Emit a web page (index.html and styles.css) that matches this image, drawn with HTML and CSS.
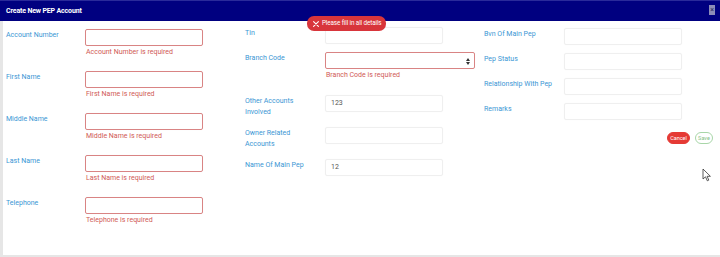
FILE: index.html
```html
<!DOCTYPE html>
<html>
<head>
<meta charset="utf-8">
<link rel="stylesheet" href="styles.css">
</head>
<body>
<div class="modal">
  <div class="modal-header">
    <span class="title">Create New PEP Account</span>
    <span class="close">×</span>
  </div>
  <div class="modal-body">
    <div class="col">
      <div class="row err">
        <label class="lbl">Account Number</label>
        <div class="field"><div class="input invalid"></div><div class="error">Account Number is required</div></div>
      </div>
      <div class="row err">
        <label class="lbl">First Name</label>
        <div class="field"><div class="input invalid"></div><div class="error">First Name is required</div></div>
      </div>
      <div class="row err">
        <label class="lbl">Middle Name</label>
        <div class="field"><div class="input invalid"></div><div class="error">Middle Name is required</div></div>
      </div>
      <div class="row err">
        <label class="lbl">Last Name</label>
        <div class="field"><div class="input invalid"></div><div class="error">Last Name is required</div></div>
      </div>
      <div class="row err">
        <label class="lbl">Telephone</label>
        <div class="field"><div class="input invalid"></div><div class="error">Telephone is required</div></div>
      </div>
    </div>
    <div class="col col2">
      <div class="row">
        <label class="lbl">Tin</label>
        <div class="field"><div class="input"></div></div>
      </div>
      <div class="row err err-wide">
        <label class="lbl">Branch Code</label>
        <div class="field"><div class="input select invalid"><svg class="caret" width="4" height="7" viewBox="0 0 4 7"><path d="M0 3 L2 0 L4 3 Z M0 4 L2 7 L4 4 Z" fill="#333"/></svg></div><div class="error">Branch Code is required</div></div>
      </div>
      <div class="row tall">
        <label class="lbl">Other Accounts<br>Involved</label>
        <div class="field"><div class="input">123</div></div>
      </div>
      <div class="row tall">
        <label class="lbl">Owner Related<br>Accounts</label>
        <div class="field"><div class="input"></div></div>
      </div>
      <div class="row">
        <label class="lbl">Name Of Main Pep</label>
        <div class="field"><div class="input">12</div></div>
      </div>
    </div>
    <div class="col col3">
      <div class="row">
        <label class="lbl">Bvn Of Main Pep</label>
        <div class="field"><div class="input"></div></div>
      </div>
      <div class="row">
        <label class="lbl">Pep Status</label>
        <div class="field"><div class="input"></div></div>
      </div>
      <div class="row">
        <label class="lbl">Relationship With Pep</label>
        <div class="field"><div class="input"></div></div>
      </div>
      <div class="row">
        <label class="lbl">Remarks</label>
        <div class="field"><div class="input"></div></div>
      </div>
      <div class="actions">
        <span class="btn cancel">Cancel</span>
        <span class="btn save">Save</span>
      </div>
    </div>
  </div>
  <div class="toast"><svg class="x" width="6" height="6" viewBox="0 0 6 6"><path d="M0.6 0.6 L5.4 5.4 M5.4 0.6 L0.6 5.4" stroke="#fff" stroke-width="1.1" stroke-linecap="round"/></svg><span>Please fill in all details</span></div>
  <svg class="cursor" width="10" height="14" viewBox="0 0 10 14"><path d="M1 1 L1 11 L3.5 8.8 L5.3 12.8 L6.8 12.1 L5.1 8.3 L8.4 8.3 Z" fill="#fff" stroke="#333" stroke-width="0.8" stroke-linejoin="round"/></svg>
</div>
</body>
</html>
```
FILE: styles.css
```css
* { box-sizing: border-box; }
html, body { margin: 0; padding: 0; background: #fff; }
body { font-family: Roboto, "Noto Sans", sans-serif; font-size: 7px; }
.modal { position: relative; width: 720px; height: 257px; overflow: hidden; }
.modal-header {
  height: 21px; background: #000080; border-top: 1px solid #2a2a9a;
  display: flex; align-items: center; justify-content: space-between;
  padding: 0 6px 0 6px;
}
.title { color: #fff; font-weight: 700; font-size: 7px; letter-spacing: -0.15px; }
.close {
  width: 6px; height: 10px; background: #8c8cb8; color: #2a2a60;
  font-size: 7px; line-height: 10px; text-align: center; margin-right: -1px; margin-top: -3px;
}
.modal-body {
  height: 236px; border-left: 3px solid #e6e6e6; border-bottom: 2px solid #e6e6e6;
  display: grid; grid-template-columns: 239px 239px 235px; padding-left: 3px;
}
.col { padding-top: 8px; }
.col2 { padding-top: 6px; }
.col3 { padding-top: 7px; }
.row { display: flex; margin-bottom: 8px; }
.row.err { margin-bottom: 13px; }
.row.err-wide { margin-bottom: 14px; }
.row.tall { margin-bottom: 9px; }
.lbl { width: 79px; flex: none; color: #3a96d4; line-height: 11px; padding-top: 1px; }
.col2 .lbl, .col3 .lbl { width: 80px; }
.input {
  width: 118px; height: 17px; border: 1px solid #efefef; border-radius: 2px;
  box-shadow: 0 0 1px rgba(0,0,0,0.06); color: #555; line-height: 15px; padding-left: 5px;
  position: relative;
}
.input.invalid { border-color: #d98484; }
.select { width: 150px; }
.caret { position: absolute; right: 4px; top: 4.5px; }
.error { color: #d05a55; line-height: 12px; padding-left: 1px; }
.actions { display: flex; justify-content: flex-end; gap: 5px; width: 229px; margin-top: 12px; }
.btn { height: 12px; border-radius: 6px; font-size: 5.5px; line-height: 10px; padding: 0 2px; text-align: center; }
.cancel { background: #e53a35; color: #fff; border: 1px solid #e53a35; width: 23px; }
.save { background: #fff; color: #86bf86; border: 1px solid #a8d6a8; width: 18px; }
.toast {
  position: absolute; left: 307px; top: 16px; width: 79px; height: 15px;
  background: #d8353b; color: #fff; border-radius: 7px; font-size: 6.3px; line-height: 15px;
  padding-left: 6px; white-space: nowrap; display: flex; align-items: center; gap: 3px;
  letter-spacing: -0.1px;
}
.toast .x { flex: none; }
.cursor { position: absolute; left: 702px; top: 168px; }
```
